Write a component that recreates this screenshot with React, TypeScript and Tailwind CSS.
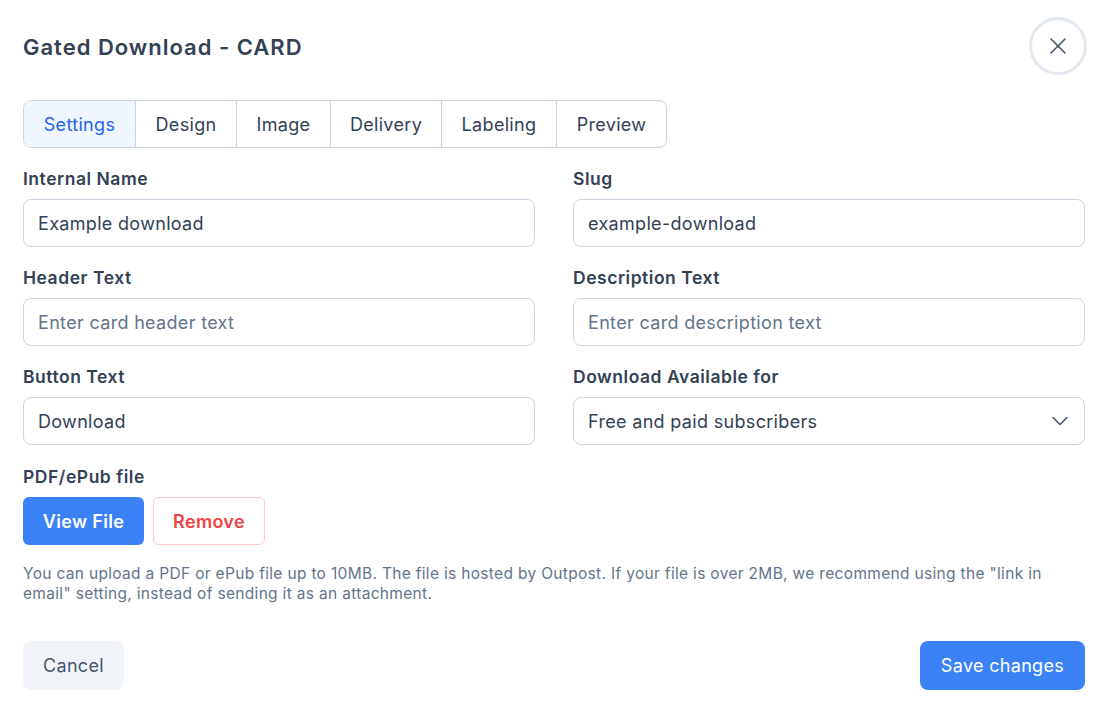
import { X, ChevronDown } from "lucide-react";

const tabs = [
  { name: "Settings", w: "w-[111px]" },
  { name: "Design", w: "w-[101px]" },
  { name: "Image", w: "w-[94px]" },
  { name: "Delivery", w: "w-[111px]" },
  { name: "Labeling", w: "w-[115px]" },
  { name: "Preview", w: "w-[110px]" },
];

function Label({ children }: { children: React.ReactNode }) {
  return (
    <div className="h-[40px] pt-[8px] text-[17.5px] font-semibold tracking-[0.03em] text-[#334155] leading-[24px]">{children}</div>
  );
}

function Field({ label, value, placeholder }: { label: string; value?: string; placeholder?: string }) {
  return (
    <div className="flex flex-col">
      <Label>{label}</Label>
      <div className="h-[48px] rounded-lg border border-[#cbd5e1] px-[14px] flex items-center text-[18px]">
        {value ? (
          <span className="text-[#334155]">{value}</span>
        ) : (
          <span className="text-[#64748b]">{placeholder}</span>
        )}
      </div>
    </div>
  );
}

export default function App() {
  return (
    <div
      className="w-[1108px] h-[714px] bg-white px-[23px] pt-[17px] text-[#334155] tracking-[0.02em]"
      style={{ fontFamily: "Inter, 'Noto Sans', sans-serif" }}
    >
      <div className="flex items-center justify-between">
        <h1 className="text-[22px] font-semibold tracking-[0.045em] text-[#334155] pt-[2px]">Gated Download - CARD</h1>
        <button className="w-[58px] h-[58px] -mr-[2px] rounded-full border-[3px] border-[#e2e8f0] flex items-center justify-center text-[#475569]">
          <X className="w-[28px] h-[28px]" strokeWidth={1.4} />
        </button>
      </div>

      <div className="mt-[25px] inline-flex h-[48px] rounded-lg border border-[#cbd5e1] overflow-hidden">
        {tabs.map((t, i) => (
          <div
            key={t.name}
            className={
              i === 0
                ? `${t.w} flex items-center justify-center text-[18px] bg-[#eff6ff] text-[#2563eb]`
                : `${t.w} flex items-center justify-center text-[18px] border-l border-[#cbd5e1] text-[#334155]`
            }
          >
            {t.name}
          </div>
        ))}
      </div>

      <div className="grid grid-cols-2 gap-x-[38px] gap-y-[11px] mt-[11px]">
        <Field label="Internal Name" value="Example download" />
        <Field label="Slug" value="example-download" />
        <Field label="Header Text" placeholder="Enter card header text" />
        <Field label="Description Text" placeholder="Enter card description text" />
        <Field label="Button Text" value="Download" />
        <div className="flex flex-col">
          <Label>Download Available for</Label>
          <div className="h-[48px] rounded-lg border border-[#cbd5e1] px-[14px] flex items-center justify-between text-[18px]">
            <span className="text-[#334155]">Free and paid subscribers</span>
            <ChevronDown className="w-[28px] h-[28px] text-[#475569] -mr-[4px]" strokeWidth={1.3} />
          </div>
        </div>
      </div>

      <div className="mt-[12px]">
        <Label>PDF/ePub file</Label>
        <div className="flex gap-[9px]">
          <button className="h-[48px] w-[121px] rounded-md bg-[#3b82f6] text-white text-[18px] font-semibold">View File</button>
          <button className="h-[48px] w-[112px] rounded-md border border-[#fecaca] text-[#ef4444] text-[18px] font-semibold">Remove</button>
        </div>
        <p className="mt-[19px] text-[15.5px] leading-[20px] text-[#64748b]">
          You can upload a PDF or ePub file up to 10MB. The file is hosted by Outpost. If your file is over 2MB, we recommend using the "link in email" setting, instead of sending it as an attachment.
        </p>
      </div>

      <div className="flex justify-between mt-[37px]">
        <button className="h-[49px] w-[101px] rounded-lg bg-[#f1f5f9] text-[18px] text-[#475569]">Cancel</button>
        <button className="h-[49px] w-[165px] rounded-lg bg-[#3b82f6] text-[18px] text-white">Save changes</button>
      </div>
    </div>
  );
}
